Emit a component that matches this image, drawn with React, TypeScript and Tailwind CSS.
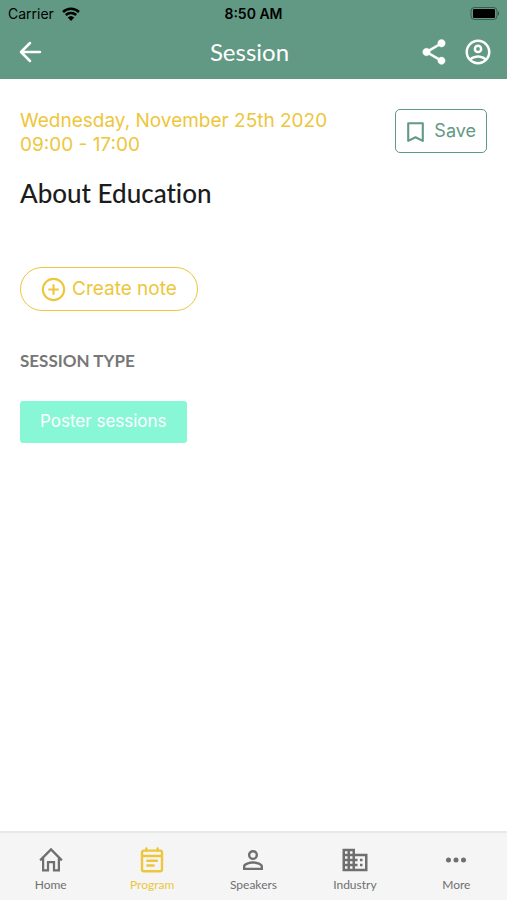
import type { ReactNode } from 'react';

function Icon({ className, children }: { className: string; children: ReactNode }) {
  return (
    <svg viewBox="0 0 24 24" fill="currentColor" aria-hidden="true" className={`shrink-0 ${className}`}>
      {children}
    </svg>
  );
}

function StatusBar() {
  return (
    <div className="grid h-7 grid-cols-3 items-center px-2 text-sm text-black">
      <div className="flex items-center gap-2">
        <span>Carrier</span>
        <svg viewBox="0 0 18 14" className="h-[14px] w-[18px]" aria-label="Wi-Fi">
          <path d="M1 5a11.6 11.6 0 0 1 16 0M3.8 8a7.6 7.6 0 0 1 10.4 0" fill="none" stroke="currentColor" strokeWidth="2.5" />
          <path d="M9 14 5.700 10.600a4.800 4.800 0 0 1 6.600 0z" fill="currentColor" />
        </svg>
      </div>
      <span className="text-center font-semibold">8:50 AM</span>
      <svg viewBox="0 0 31 14" className="h-[14px] w-[31px] justify-self-end" aria-label="Battery">
        <rect x="3" y="0.500" width="26" height="12" rx="3.500" fill="none" stroke="#000" strokeOpacity=".4" />
        <rect x="5" y="2" width="22" height="9" rx="1" fill="#000" />
        <path d="M30 4.300c1.300 .7 1.300 3.700 0 4.400z" fill="#000" fillOpacity=".5" />
      </svg>
    </div>
  );
}

const tabs: { label: string; active?: boolean; icon: ReactNode }[] = [
  {
    label: 'Home',
    icon: (
      <path
        d="M3.300 12.300 12 3.500l8.700 8.800M5.700 10.500v9.700h3.900v-6.500h4.800v6.500h3.900v-9.700"
        fill="none"
        stroke="currentColor"
        strokeWidth="1.800"
      />
    ),
  },
  {
    label: 'Program',
    active: true,
    icon: (
      <path
        d="M5.500 4.500h13a1.500 1.500 0 0 1 1.500 1.500v13.500a1.500 1.500 0 0 1-1.500 1.500h-13a1.500 1.500 0 0 1-1.500-1.500V6a1.500 1.500 0 0 1 1.500-1.500zM4 8.800h16M7.500 2.800v2M16.500 2.800v2M8.300 12.600h7.600M8.300 16.400h5"
        fill="none"
        stroke="currentColor"
        strokeWidth="1.900"
        strokeLinecap="round"
      />
    ),
  },
  {
    label: 'Speakers',
    icon: (
      <path d="M12 5.900a2.100 2.100 0 1 1 0 4.200 2.100 2.100 0 0 1 0-4.200m0 9c2.970 0 6.100 1.460 6.100 2.100v1.100H5.900V17c0-.64 3.130-2.100 6.100-2.100M12 4C9.790 4 8 5.790 8 8s1.790 4 4 4 4-1.790 4-4-1.790-4-4-4zm0 9c-2.670 0-8 1.340-8 4v3h16v-3c0-2.660-5.330-4-8-4z" />
    ),
  },
  {
    label: 'Industry',
    icon: (
      <path d="M12 7V3H2v18h20V7H12zM6 19H4v-2h2v2zm0-4H4v-2h2v2zm0-4H4V9h2v2zm0-4H4V5h2v2zm4 12H8v-2h2v2zm0-4H8v-2h2v2zm0-4H8V9h2v2zm0-4H8V5h2v2zm10 12h-8v-2h2v-2h-2v-2h2v-2h-2V9h8v10zm-2-8h-2v2h2v-2zm0 4h-2v2h2v-2z" />
    ),
  },
  {
    label: 'More',
    icon: (
      <path d="M6 10a2 2 0 1 0 0 4 2 2 0 0 0 0-4zm6 0a2 2 0 1 0 0 4 2 2 0 0 0 0-4zm6 0a2 2 0 1 0 0 4 2 2 0 0 0 0-4z" />
    ),
  },
];

export default function App() {
  return (
    <div className="flex min-h-screen flex-col bg-white font-['Inter','Liberation_Sans',sans-serif]">
      <header className="bg-[#629984] pb-[3px]">
        <StatusBar />
        <div className="flex h-12 items-center justify-between px-4 text-white">
          <div className="flex flex-1">
            <button type="button" aria-label="Back">
              <Icon className="size-[28px]">
                <path d="M20.500 12H4.500M12 4.300 4.300 12l7.700 7.700" fill="none" stroke="currentColor" strokeWidth="2.200" strokeLinecap="round" strokeLinejoin="round" />
              </Icon>
            </button>
          </div>
          <h1 className="pr-2 font-['Lato',sans-serif] text-2xl">Session</h1>
          <div className="flex flex-1 items-center justify-end gap-[14px]">
            <button type="button" aria-label="Share">
              <Icon className="size-[30px]">
                <path d="M18 16.080c-.76 0-1.440.3-1.960.77L8.910 12.700c.05-.23.090-.46.090-.7s-.04-.47-.09-.7l7.050-4.110c.54.5 1.250.81 2.040.81 1.660 0 3-1.340 3-3s-1.340-3-3-3-3 1.340-3 3c0 .24.040.47.090.7L8.040 9.810C7.500 9.310 6.790 9 6 9c-1.660 0-3 1.340-3 3s1.340 3 3 3c.79 0 1.500-.31 2.040-.81l7.120 4.160c-.05.21-.08.43-.08.650 0 1.610 1.310 2.920 2.920 2.920s2.920-1.310 2.920-2.920-1.310-2.920-2.920-2.920z" stroke="currentColor" strokeWidth=".3" />
              </Icon>
            </button>
            <button type="button" aria-label="Profile" className="-mr-0.5">
              <Icon className="size-[30px]">
                <path d="M12,2A10,10 0 0,0 2,12A10,10 0 0,0 12,22A10,10 0 0,0 22,12A10,10 0 0,0 12,2M7.070,18.280C7.500,17.380 10.120,16.500 12,16.500C13.880,16.500 16.500,17.380 16.930,18.280C15.570,19.360 13.860,20 12,20C10.140,20 8.430,19.360 7.070,18.280M18.360,16.830C16.930,15.090 13.460,14.500 12,14.500C10.540,14.500 7.070,15.090 5.640,16.830C4.620,15.500 4,13.820 4,12C4,7.590 7.590,4 12,4C16.410,4 20,7.590 20,12C20,13.820 19.380,15.500 18.360,16.830M12,6C10.060,6 8.500,7.560 8.500,9.500C8.500,11.440 10.060,13 12,13C13.940,13 15.500,11.440 15.500,9.500C15.500,7.560 13.940,6 12,6M12,11A1.500,1.500 0 0,1 10.500,9.500A1.500,1.500 0 0,1 12,8A1.500,1.500 0 0,1 13.500,9.500A1.500,1.500 0 0,1 12,11Z" />
              </Icon>
            </button>
          </div>
        </div>
      </header>

      <main className="flex flex-1 flex-col items-start px-5 pt-[30px]">
        <div className="flex w-full items-start justify-between">
          <p className="text-[19px] leading-6 text-[#edc63c]">
            Wednesday, November 25th 2020
            <br />
            09:00 - 17:00
          </p>
          <button type="button" className="flex h-11 items-center gap-1.5 rounded-[5px] border border-[#629984] pr-[10px] pl-[7px] text-lg text-[#629984]">
            <Icon className="size-[25px]">
              <path d="M5 4h14v17l-7-3.500L5 21z" fill="none" stroke="currentColor" strokeWidth="2" strokeLinejoin="round" />
            </Icon>
            Save
          </button>
        </div>

        <h2 className="mt-5 font-['Lato',sans-serif] text-[26px] leading-8 font-medium text-[#1c1c1c] [font-variant-ligatures:none]">
          About Education
        </h2>

        <button type="button" className="mt-[58px] flex h-11 items-center gap-1.5 rounded-full border border-[#edc63c] px-5 text-[19px] text-[#edc63c]">
          <Icon className="size-[25px]">
            <path d="M12 1.800a10.200 10.200 0 1 1 0 20.400 10.200 10.200 0 0 1 0-20.400zM12 7v10M7 12h10" fill="none" stroke="currentColor" strokeWidth="2" />
          </Icon>
          Create note
        </button>

        <h3 className="mt-10 font-['Lato',sans-serif] text-[17px] leading-5 font-bold text-[#777]">SESSION TYPE</h3>
        <span className="mt-[30px] flex h-[42px] items-center rounded-[3px] bg-[#88f7d5] px-5 text-[17px] text-white">Poster sessions</span>
      </main>

      <nav className="grid grid-cols-5 border-t-2 border-[#e8e8e8] bg-[#f5f5f5] pt-3 pb-[7px] font-['Lato',sans-serif]">
        {tabs.map((tab) => (
          <a
            key={tab.label}
            href={`#${tab.label.toLowerCase()}`}
            aria-current={tab.active ? 'page' : undefined}
            className={`flex flex-col items-center gap-0.5 text-xs ${tab.active ? 'text-[#edc63c]' : 'text-[#6f6f6f]'}`}
          >
            <Icon className="size-[30px]">{tab.icon}</Icon>
            {tab.label}
          </a>
        ))}
      </nav>
    </div>
  );
}
